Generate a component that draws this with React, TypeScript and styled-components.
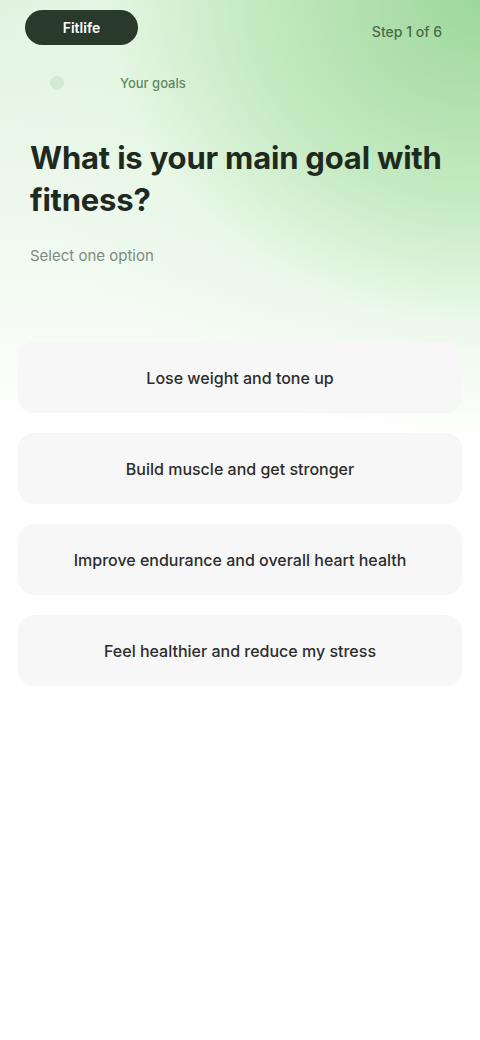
import React from "react";
import styled, { createGlobalStyle } from "styled-components";

const Global = createGlobalStyle`
  html, body { margin: 0; padding: 0; background: #ffffff; }
  body { font-family: Inter, "Noto Sans", "Liberation Sans", sans-serif; }
  * { box-sizing: border-box; }
`;

const options = [
  "Lose weight and tone up",
  "Build muscle and get stronger",
  "Improve endurance and overall heart health",
  "Feel healthier and reduce my stress",
];

const Page = styled.div`
  min-height: 1040px;
  width: 480px;
  background:
    radial-gradient(ellipse 600px 520px at 100% 0%, #9ed79b 0%, #c4eac1 38%, rgba(230,247,228,0.6) 62%, rgba(255,255,255,0) 85%),
    linear-gradient(180deg, #e1f3e0 0px, #f4fbf3 300px, #ffffff 430px);
`;

const TopBar = styled.div`
  display: flex;
  align-items: center;
  justify-content: space-between;
  padding: 10px 38px 0 25px;
`;

const Pill = styled.button`
  width: 113px;
  height: 35px;
  border: none;
  border-radius: 18px;
  background: #2a3a2a;
  color: #ffffff;
  font-family: inherit;
  font-size: 14px;
  font-weight: 600;
`;

const StepText = styled.span`
  font-size: 14px;
  font-weight: 500;
  color: #4a6b4a;
  margin-top: 8px;
`;

const SubBar = styled.div`
  display: flex;
  align-items: center;
  gap: 56px;
  padding: 30px 0 0 50px;
  height: 46px;
`;

const Dot = styled.span`
  width: 14px;
  height: 14px;
  border-radius: 50%;
  background: #d3e9d3;
`;

const Crumb = styled.span`
  font-size: 13px;
  font-weight: 500;
  color: #5f8a5f;
`;

const Intro = styled.div`
  padding: 46px 30px 0 30px;
`;

const Title = styled.h1`
  margin: 0;
  font-size: 31px;
  line-height: 42px;
  font-weight: 700;
  color: #1f2a1f;
  letter-spacing: -0.2px;
`;

const Subtitle = styled.p`
  margin: 25px 0 0 0;
  font-size: 15px;
  color: #7d8a7d;
`;

const OptionList = styled.div`
  display: flex;
  flex-direction: column;
  gap: 20px;
  padding: 77px 18px 0 18px;
`;

const Option = styled.button`
  height: 71px;
  border: none;
  border-radius: 16px;
  background: #f6f7f6;
  font-family: inherit;
  font-size: 16px;
  font-weight: 500;
  color: #2d2d2d;
  text-align: center;
`;

export default function App() {
  return (
    <Page>
      <Global />
      <TopBar>
        <Pill>Fitlife</Pill>
        <StepText>Step 1 of 6</StepText>
      </TopBar>
      <SubBar>
        <Dot />
        <Crumb>Your goals</Crumb>
      </SubBar>
      <Intro>
        <Title>What is your main goal with fitness?</Title>
        <Subtitle>Select one option</Subtitle>
      </Intro>
      <OptionList>
        {options.map((o) => (
          <Option key={o}>{o}</Option>
        ))}
      </OptionList>
    </Page>
  );
}
